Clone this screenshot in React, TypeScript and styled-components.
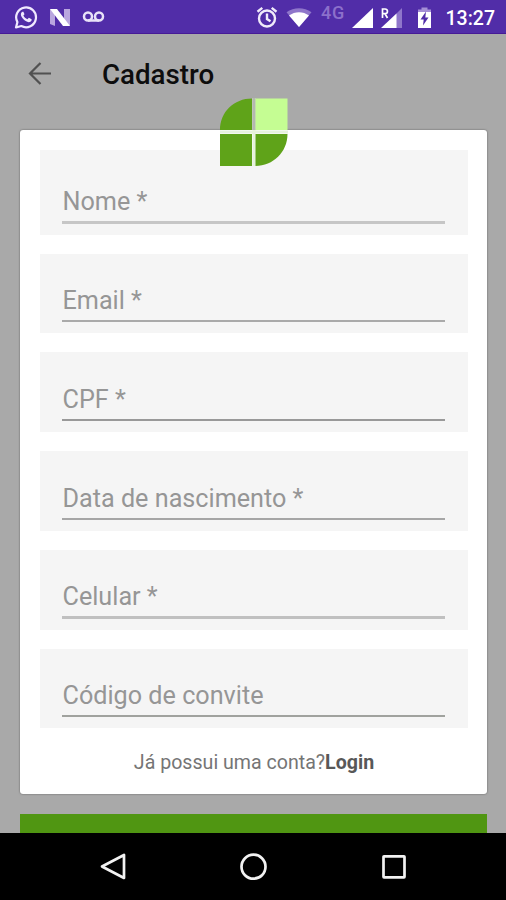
import React from 'react';
import styled, { createGlobalStyle } from 'styled-components';

const GlobalStyle = createGlobalStyle`
  * { box-sizing: border-box; }
  body { margin: 0; background: #a9a9a9; font-family: Roboto, "Liberation Sans", sans-serif; }
`;

const Screen = styled.div`
  width: 506px;
  height: 900px;
  display: flex;
  flex-direction: column;
  background: #a9a9a9;
  overflow: hidden;
`;

const StatusBar = styled.header`
  height: 34px;
  flex: none;
  display: flex;
  align-items: flex-start;
  background: #512da8;
  border-bottom: 1px solid #461a96;
`;

const StatusIcon = styled.svg<{ $left: number }>`
  flex: none;
  display: block;
  margin-top: 5px;
  margin-left: ${(p) => p.$left}px;
`;

const Network = styled.span`
  width: 25px;
  margin: 3px 0 0 9px;
  color: #8c70cb;
  font-size: 18px;
  line-height: 20px;
  font-weight: 500;
  letter-spacing: 0.8px;
`;

const Clock = styled.time`
  margin: 7px 0 0 13.5px;
  color: #fff;
  font-size: 19.5px;
  line-height: 24px;
  font-weight: 500;
`;

const AppBar = styled.div`
  height: 96px;
  flex: none;
  display: flex;
  align-items: flex-start;
  padding: 27px 0 0 28px;
`;

const BackButton = styled.button`
  width: 24px;
  height: 24px;
  padding: 0;
  border: 0;
  background: none;
  svg { display: block; }
`;

const Title = styled.h1`
  margin: -2px 0 0 50px;
  color: #0d0d0d;
  font-size: 27.7px;
  line-height: 32px;
  font-weight: 500;
`;

const Content = styled.main`
  height: 703px;
  flex: none;
  display: flex;
  flex-direction: column;
  gap: 20px;
  padding: 0 19px 0 20px;
`;

const Card = styled.form`
  position: relative;
  height: 664px;
  flex: none;
  padding: 20px 19px 0 20px;
  border-radius: 3px;
  background: #fff;
  box-shadow: 0 0 2px rgba(0, 0, 0, 0.5);
`;

const Logo = styled.svg`
  position: absolute;
  left: 200px;
  top: -32px;
`;

const FieldList = styled.div`
  display: flex;
  flex-direction: column;
  gap: 19px;
`;

const Field = styled.label<{ $first?: boolean }>`
  height: ${(p) => (p.$first ? 84.5 : 79.8)}px;
  display: flex;
  flex-direction: column;
  justify-content: flex-end;
  padding: 0 23px 11px 22px;
  background: #f5f5f5;
`;

const Input = styled.input`
  width: 100%;
  height: 39.6px;
  padding: 0 0 0 0.5px;
  border: 0;
  outline: 0;
  background: transparent;
  font: 400 25.2px/32px Roboto, "Liberation Sans", sans-serif;
  color: #333;
  &::placeholder { color: #969696; opacity: 1; }
`;

const Underline = styled.span<{ $thick: number; $color: string }>`
  height: ${(p) => p.$thick}px;
  margin-top: ${(p) => 2 - p.$thick}px;
  flex: none;
  background: ${(p) => p.$color};
`;

const LoginLine = styled.p`
  margin: 22px 0 0;
  text-align: center;
  color: #757575;
  font-size: 19.6px;
  line-height: 26px;
  b { font-weight: 700; color: #585858; }
`;

const SubmitButton = styled.button`
  height: 19px;
  flex: none;
  border: 0;
  background: #509612;
`;

const NavBar = styled.nav`
  height: 67px;
  flex: none;
  display: flex;
  justify-content: center;
  padding: 20px 0 0 0;
  gap: 112px;
  background: #000;
  svg { display: block; }
`;

const fields = [
  { label: 'Nome *', thick: 3, color: '#c6c6c6' },
  { label: 'Email *', thick: 2, color: '#aaaaaa' },
  { label: 'CPF *', thick: 2, color: '#999999' },
  { label: 'Data de nascimento *', thick: 2, color: '#a6a6a6' },
  { label: 'Celular *', thick: 3, color: '#c0c0c0' },
  { label: 'Código de convite', thick: 2, color: '#a0a29e' },
];

export default function App() {
  return (
    <>
      <GlobalStyle />
      <Screen>
        <StatusBar>
          <StatusIcon $left={14} width="24" height="24" viewBox="0 0 24 24">
            <path d="M2 22.5l1.4-5.4A9.9 9.9 0 1 1 7.3 21z" fill="none" stroke="#f0e9ff" strokeWidth="2.2" strokeLinejoin="round" />
            <path d="M8.4 6.8c-2.3 1.4-1.8 4.2.4 6.8 2.4 2.9 5.8 4.5 7.9 2.9 1-.8 1.1-1.7.9-2.3l-2.7-1.4-1.5 1.5c-1.9-.7-3.2-2.1-4-3.7l1.1-1.4-1.1-2.4z" fill="#f0e9ff" />
          </StatusIcon>
          <StatusIcon $left={11} width="22" height="24" viewBox="0 0 22 24">
            <path d="M1 4l5 4v13l-5-2zM15 4h6v17l-6-4z" fill="#b9a6df" />
            <path d="M1 4h7l13 17h-7z" fill="#fff" />
          </StatusIcon>
          <StatusIcon $left={11} width="23" height="24" viewBox="0 0 23 24">
            <g fill="none" stroke="#e9e2f8" strokeWidth="2.5">
              <circle cx="6" cy="11.5" r="4" />
              <circle cx="17" cy="11.5" r="4" />
              <path d="M6 15.5h11" />
            </g>
          </StatusIcon>
          <StatusIcon $left={151} width="22" height="24" viewBox="0 0 22 24">
            <g fill="none" stroke="#f0ebfa" strokeWidth="2.4">
              <circle cx="11" cy="13.5" r="8" />
              <path d="M11 8.5v5.5l3.5 2.3M1.5 6.7L6.3 2.9M20.5 6.7l-4.8-3.8" />
            </g>
          </StatusIcon>
          <StatusIcon $left={8} width="26" height="24" viewBox="0 0 26 24">
            <path d="M.5 7.2C8 1.8 18 1.8 25.5 7.2L13 22z" fill="#8f76ca" />
            <path d="M3 10.5c6-4.5 14-4.5 20 0L13 22z" fill="#fff" />
          </StatusIcon>
          <Network>4G</Network>
          <StatusIcon $left={6} width="22" height="24" viewBox="0 0 22 24">
            <path d="M0 23L21 3v20z" fill="#fff" />
          </StatusIcon>
          <StatusIcon $left={7} width="22" height="24" viewBox="0 0 22 24">
            <path d="M15 9l6-6v20h-6z" fill="#8f76ca" />
            <path d="M0 23L15.5 8.5V23z" fill="#fff" />
            <path d="M1.5 13V4h2.6a2.3 2.3 0 0 1 0 4.700H1.5M4 8.7L6.5 13" fill="none" stroke="#fff" strokeWidth="1.7" />
          </StatusIcon>
          <StatusIcon $left={14} width="15" height="24" viewBox="0 0 15 24">
            <path d="M4.5 2.5h6v2H14v6H1v-6h3.5z" fill="#a58fd6" />
            <path d="M1 7h13v16H1z" fill="#fff" />
            <path d="M9 6.5L3.5 14.5h3.2L6 20.5l5.5-8H8.3z" fill="#512da8" />
          </StatusIcon>
          <Clock>13:27</Clock>
        </StatusBar>
        <AppBar>
          <BackButton type="button" aria-label="Voltar">
            <svg width="24" height="24" viewBox="0 0 24 24">
              <path d="M23 12.5H2M12.5 2L2 12.5 12.5 23" fill="none" stroke="#515151" strokeWidth="2.2" />
            </svg>
          </BackButton>
          <Title>Cadastro</Title>
        </AppBar>
        <Content>
          <Card>
            <FieldList>
              {fields.map((f, i) => (
                <Field key={f.label} $first={i === 0}>
                  <Input placeholder={f.label} />
                  <Underline $thick={f.thick} $color={f.color} />
                </Field>
              ))}
            </FieldList>
            <LoginLine>Já possui uma conta?<b>Login</b></LoginLine>
            <Logo width="68" height="69" viewBox="0 0 68 69">
              <path d="M34 0v68M0 34h68" stroke="#e6f2dc" strokeWidth="3" />
              <path d="M34 0v32" stroke="#b4b8b0" strokeWidth="3" />
              <path d="M0 32C0 14 14 .5 32 .5V32zM0 36h32v32H0zM35.5 36H67.5C67.5 54 53 68 35.5 68z" fill="#5fa319" />
              <path d="M35.5 .5h32V32h-32z" fill="#c5fd93" />
            </Logo>
          </Card>
          <SubmitButton type="submit" aria-label="Cadastrar" />
        </Content>
        <NavBar>
          <svg width="28" height="28" viewBox="0 0 28 28">
            <path d="M25 2v23L3 13.5z" fill="none" stroke="#f2f2f2" strokeWidth="2.7" strokeLinejoin="round" />
          </svg>
          <svg width="28" height="28" viewBox="0 0 28 28">
            <circle cx="14.500" cy="13.7" r="12" fill="none" stroke="#f2f2f2" strokeWidth="2.7" />
          </svg>
          <svg width="28" height="28" viewBox="0 0 28 28">
            <rect x="4.500" y="3.3" width="21" height="21" rx=".5" fill="none" stroke="#f2f2f2" strokeWidth="2.7" />
          </svg>
        </NavBar>
      </Screen>
    </>
  );
}
